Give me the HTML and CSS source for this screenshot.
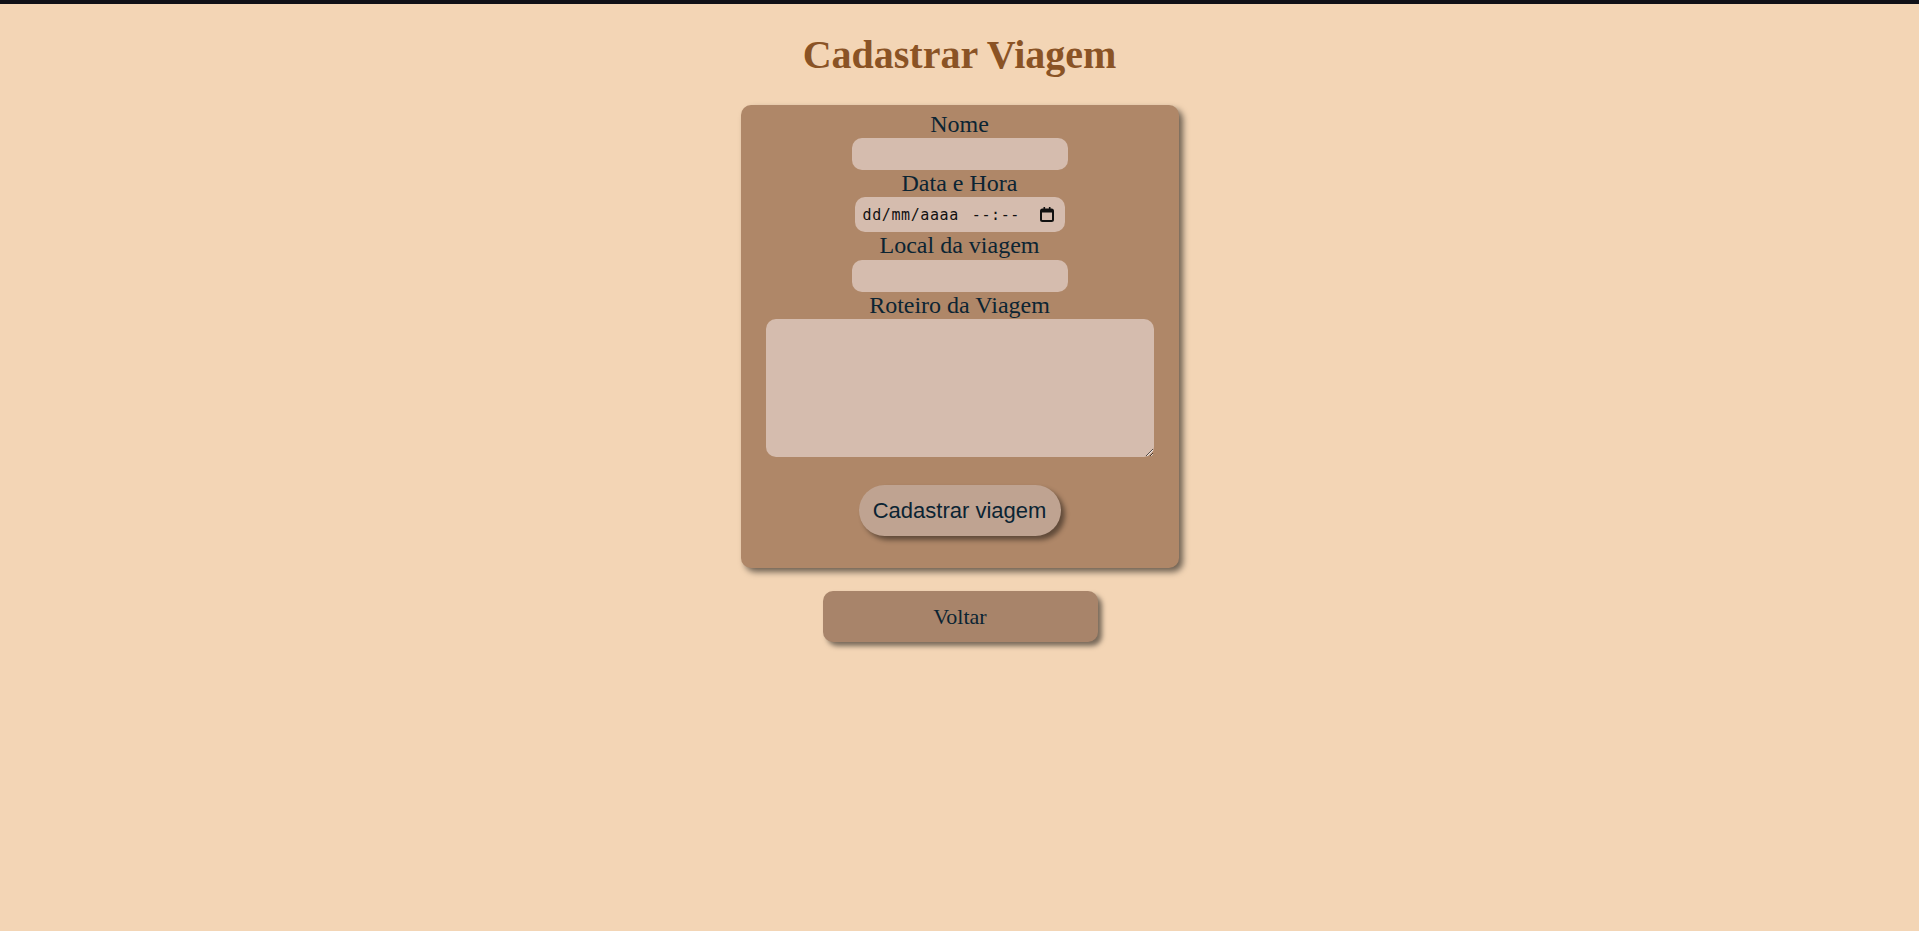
FILE: index.html
```html
<!DOCTYPE html>
<html lang="pt-BR">
<head>
<meta charset="utf-8">
<title>Cadastrar Viagem</title>
<link rel="stylesheet" href="styles.css">
</head>
<body>
<div class="topbar"></div>
<main class="page">
  <h1 class="title">Cadastrar Viagem</h1>
  <form class="card">
    <label class="label" for="nome">Nome</label>
    <input class="field" id="nome" type="text">
    <label class="label" for="data">Data e Hora</label>
    <div class="date-field" id="data">
      <span class="date-text">dd/mm/aaaa</span>
      <span class="time-text">--:--</span>
      <svg class="cal-icon" width="14" height="15" viewBox="0 0 14 15" aria-hidden="true">
        <rect x="1" y="2.5" width="12" height="11.5" rx="1.5" fill="none" stroke="#111" stroke-width="2"/>
        <rect x="1" y="2.5" width="12" height="3" fill="#111"/>
        <rect x="3.5" y="0" width="1.6" height="3" fill="#111"/>
        <rect x="8.9" y="0" width="1.6" height="3" fill="#111"/>
      </svg>
    </div>
    <label class="label" for="local">Local da viagem</label>
    <input class="field" id="local" type="text">
    <label class="label" for="roteiro">Roteiro da Viagem</label>
    <textarea class="textarea" id="roteiro"></textarea>
    <button class="submit" type="button">Cadastrar viagem</button>
  </form>
  <a class="back" href="#">Voltar</a>
</main>
</body>
</html>
```

FILE: styles.css
```css
html, body {
  margin: 0;
  padding: 0;
}

body {
  background: #f3d5b5;
  font-family: "Liberation Serif", "Times New Roman", serif;
  color: #0b2433;
  min-height: 931px;
}

.topbar {
  height: 4px;
  background: #101017;
}

.page {
  display: flex;
  flex-direction: column;
  align-items: center;
}

.title {
  margin: 26.8px 0;
  font-size: 40px;
  font-weight: bold;
  color: #8a5325;
}

.card {
  box-sizing: border-box;
  width: 438px;
  padding: 6px 0 32px;
  background: #af8768;
  border-radius: 10px;
  box-shadow: 4px 4px 6px rgba(0, 0, 0, 0.55);
  display: flex;
  flex-direction: column;
  align-items: center;
}

.label {
  display: block;
  font-size: 24px;
  line-height: 27.6px;
  color: #0b2433;
}

.field {
  box-sizing: border-box;
  width: 216px;
  height: 32px;
  border: none;
  border-radius: 10px;
  background: #d5bcae;
  padding: 0 10px;
  margin: 0;
  font-family: "Liberation Sans", Arial, sans-serif;
  font-size: 14px;
  outline: none;
}

.date-field {
  box-sizing: border-box;
  width: 210px;
  height: 35px;
  margin-top: -0.6px;
  border-radius: 10px;
  background: #d5bcae;
  display: flex;
  align-items: center;
  padding: 0 11px 0 8px;
  font-family: "DejaVu Sans Mono", "Liberation Mono", monospace;
  font-size: 15px;
  color: #111;
}

.date-text {
  letter-spacing: 0.6px;
}

.time-text {
  margin-left: 13px;
  letter-spacing: 0.6px;
}

.cal-icon {
  margin-left: auto;
}

.textarea {
  box-sizing: border-box;
  width: 388px;
  height: 138px;
  margin: 0;
  border: none;
  border-radius: 10px;
  background: #d5bcae;
  padding: 6px;
  font-family: "Liberation Sans", Arial, sans-serif;
  font-size: 14px;
  outline: none;
  display: block;
}

.submit {
  margin-top: 28px;
  box-sizing: border-box;
  width: 202px;
  height: 51px;
  border: none;
  border-radius: 26px;
  background: #bfa391;
  box-shadow: 4px 4px 5px rgba(0, 0, 0, 0.45);
  font-family: "Liberation Sans", Arial, sans-serif;
  font-size: 22px;
  color: #0b2433;
  padding: 0;
  cursor: pointer;
}

.back {
  margin-top: 23px;
  margin-left: 1px;
  box-sizing: border-box;
  width: 275px;
  height: 51px;
  border-radius: 10px;
  background: #a8846a;
  box-shadow: 4px 4px 5px rgba(0, 0, 0, 0.5);
  display: flex;
  align-items: center;
  justify-content: center;
  font-size: 22px;
  color: #0b2433;
  text-decoration: none;
}
```
